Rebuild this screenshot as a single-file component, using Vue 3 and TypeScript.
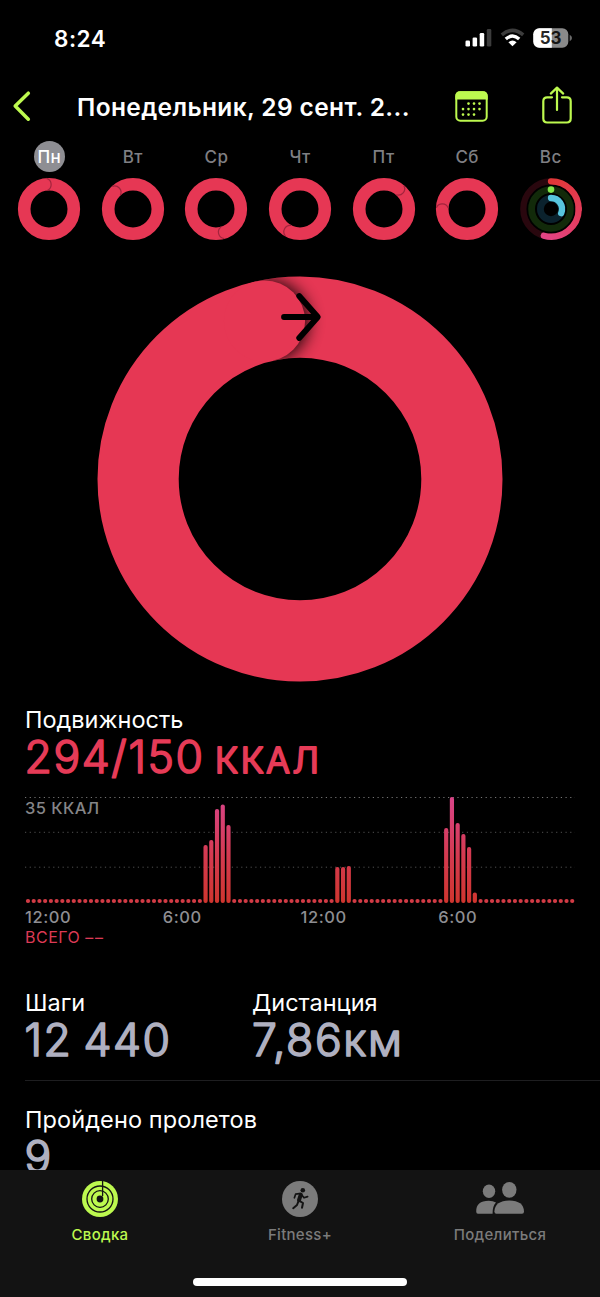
<script setup lang="ts">
interface Day {
  label: string
  angle: number | null
}

// angle: where the head of the closed move ring rests, clockwise from 12 o'clock
const days: Day[] = [
  { label: 'Пн', angle: 3 },
  { label: 'Вт', angle: -35 },
  { label: 'Ср', angle: 172 },
  { label: 'Чт', angle: 216 },
  { label: 'Пт', angle: 48 },
  { label: 'Сб', angle: -80 },
  { label: 'Вс', angle: null },
]

const SLOTS = 96
const SLOT = 550 / SLOTS
const samples: Record<number, number> = {
  31: 58, 32: 63, 33: 94, 34: 98.5, 35: 78,
  54: 36, 55: 36, 56: 37,
  73: 75, 74: 106, 75: 80, 76: 69, 77: 56, 78: 10.5,
}
const bars = Array.from({ length: SLOTS }, (_, i) => {
  const h = samples[i] ?? 4
  return { x: (i + 0.5) * SLOT - 2, y: 109 - h, h }
})

const hours = ['12:00', '6:00', '12:00', '6:00']
const calendarDots = [
  [13.5, 12], [19, 12], [24.5, 12],
  [8, 17.5], [13.5, 17.5], [19, 17.5], [24.5, 17.5],
  [8, 23], [13.5, 23], [19, 23],
]
</script>

<template>
  <div class="screen">
    <header class="status">
      <span class="clock">8:24</span>
      <div class="indicators">
        <svg class="signal" width="27" height="20" viewBox="0 0 27 20">
          <rect x="0.5" y="12.5" width="4.5" height="6" rx="1.3" fill="#fff" />
          <rect x="7.6" y="9.5" width="4.5" height="9" rx="1.3" fill="#fff" />
          <rect x="14.7" y="5" width="4.5" height="13.5" rx="1.3" fill="#fff" />
          <rect x="21.8" y="1" width="4.5" height="17.5" rx="1.3" fill="#3c3c3c" />
        </svg>
        <svg class="wifi" width="25" height="20" viewBox="0 0 25 20">
          <path d="M1.8 6.9Q12.5-2 23.2 6.9" fill="none" stroke="#3c3c3c" stroke-width="3.6" />
          <path d="M5.8 11.1Q12.5 5 19.2 11.1" fill="none" stroke="#fff" stroke-width="3.4" />
          <path d="M8.4 14.2Q12.5 10.8 16.6 14.2L12.5 18.3Z" fill="#fff" />
        </svg>
        <svg class="battery" width="40" height="20" viewBox="0 0 40 20">
          <defs>
            <clipPath id="cell"><rect x="0.3" y="0.3" width="35" height="19.4" rx="6" /></clipPath>
          </defs>
          <g clip-path="url(#cell)">
            <rect width="36" height="20" fill="#8a8a8a" />
            <rect width="18.8" height="20" fill="#fff" />
          </g>
          <path d="M36.7 6.8Q39 8 39 10T36.7 13.2Z" fill="#6a6a6a" />
          <text x="17.6" y="16" text-anchor="middle" class="charge">53</text>
        </svg>
      </div>
    </header>

    <nav class="bar">
      <svg class="back" width="20" height="32" viewBox="0 0 20 32">
        <path d="M17.3 3.2L4.2 16L17.3 29.2" fill="none" stroke="#bdf94f" stroke-width="3.5" stroke-linecap="round" stroke-linejoin="round" />
      </svg>
      <h1 class="title">Понедельник, 29 сент. 2...</h1>
      <svg class="calendar" width="33" height="31" viewBox="0 0 33 31">
        <rect x="1.3" y="1.3" width="30.4" height="28.4" rx="4" fill="none" stroke="#bdf94f" stroke-width="2" />
        <path d="M0.3 8.6V5Q0.3 0.3 5 0.3H28Q32.7 0.3 32.7 5V8.6Z" fill="#bdf94f" />
        <circle v-for="([x, y], i) in calendarDots" :key="i" :cx="x" :cy="y + 0.6" r="1.3" fill="#bdf94f" />
      </svg>
      <svg class="share" width="30" height="38" viewBox="0 0 30 38">
        <g fill="none" stroke="#bdf94f" stroke-width="2.2" stroke-linecap="round" stroke-linejoin="round">
          <path d="M10 11.3H5.2Q1.3 11.3 1.3 15.2V32.6Q1.3 36.5 5.2 36.5H24.8Q28.7 36.5 28.7 32.6V15.2Q28.7 11.3 24.8 11.3H20" />
          <path d="M15 24V2.2M8.8 7.6L15 1.6L21.2 7.6" />
        </g>
      </svg>
    </nav>

    <section class="week">
      <div v-for="(day, i) in days" :key="day.label" class="day">
        <span class="day-label" :class="{ selected: i === 0 }">{{ day.label }}</span>
        <svg width="64" height="64" viewBox="-32 -32 64 64">
          <g v-if="day.angle !== null" fill="none">
            <circle r="24.8" stroke="#e63754" stroke-width="12.6" />
            <g :transform="`rotate(${day.angle})`">
              <path d="M-4 -30.4A6.4 6.4 0 0 1 -2.4 -18.6" stroke="#a3243d" stroke-width="1.2" />
            </g>
          </g>
          <g v-else fill="none" stroke-linecap="round">
            <circle r="27.7" stroke="#29070e" stroke-width="6.3" />
            <circle r="19.4" stroke="#122a0a" stroke-width="6.8" />
            <circle r="10.6" stroke="#0b222d" stroke-width="6.8" />
            <path d="M0 -27.7A27.7 27.7 0 0 1 27.7 0" stroke="url(#moveTop)" stroke-width="6.3" />
            <path d="M27.7 0A27.7 27.7 0 0 1 -7.2 26.7" stroke="url(#moveLow)" stroke-width="6.3" />
            <circle cy="-19.4" r="3.3" fill="#83e64d" />
            <path d="M0 -11A11 11 0 0 1 10.2 4.2" stroke="#57c5de" stroke-width="6.3" />
            <defs>
              <linearGradient id="moveTop" gradientUnits="userSpaceOnUse" x1="0" y1="-28" x2="28" y2="0">
                <stop offset="0" stop-color="#df3737" /><stop offset="1" stop-color="#e33b57" />
              </linearGradient>
              <linearGradient id="moveLow" gradientUnits="userSpaceOnUse" x1="28" y1="0" x2="-7" y2="28">
                <stop offset="0" stop-color="#e33b57" /><stop offset="1" stop-color="#e34486" />
              </linearGradient>
            </defs>
          </g>
        </svg>
      </div>
    </section>

    <section class="hero">
      <svg width="406" height="406" viewBox="-203 -203 406 406">
        <defs>
          <clipPath id="band">
            <path clip-rule="evenodd" d="M0-202.5A202.5 202.5 0 1 1 0 202.5A202.5 202.5 0 1 1 0-202.5ZM0-121.3A121.3 121.3 0 1 0 0 121.3A121.3 121.3 0 1 0 0-121.3Z" />
          </clipPath>
          <clipPath id="ahead"><path d="M-45-203L-26.5-117L60-117V-203Z" /></clipPath>
          <filter id="soft" x="-50%" y="-50%" width="200%" height="200%"><feGaussianBlur stdDeviation="8" /></filter>
        </defs>
        <circle r="161.9" fill="none" stroke="#e63754" stroke-width="81.2" />
        <g clip-path="url(#band)">
          <g clip-path="url(#ahead)">
            <circle cx="-32" cy="-158.2" r="41" fill="#000" opacity=".85" filter="url(#soft)" />
          </g>
          <circle cx="-35.5" cy="-158" r="40.6" fill="#e63754" />
        </g>
        <path d="M-16 -162H17.5M-0.8 -183L17.8 -162L-0.8 -141" fill="none" stroke="#000" stroke-width="5.8" stroke-linecap="round" stroke-linejoin="round" />
      </svg>
    </section>

    <main class="details">
      <h2 class="metric">Подвижность</h2>
      <svg class="figure" width="400" height="50">
        <g class="red">
          <text class="num" x="-0.5" y="42" textLength="178.5">294/150</text>
          <text class="unit" x="190" y="42" textLength="104">ККАЛ</text>
        </g>
      </svg>

      <div class="chart">
        <svg width="550" height="112" viewBox="0 0 550 112">
          <defs>
            <linearGradient id="heat" gradientUnits="userSpaceOnUse" x1="0" y1="3" x2="0" y2="109">
              <stop offset="0" stop-color="#d94488" /><stop offset=".55" stop-color="#d43a50" /><stop offset="1" stop-color="#cf352e" />
            </linearGradient>
          </defs>
          <g stroke-width="1" stroke-dasharray="1.2 3.5">
            <path d="M0 3.5H550" stroke="#757575" />
            <path d="M0 38.3H550M0 73.2H550" stroke="#505050" />
          </g>
          <rect v-for="(bar, i) in bars" :key="i" :x="bar.x" :y="bar.y" width="4.2" :height="bar.h" rx="2" :fill="bar.h === 4 ? '#d23b45' : 'url(#heat)'" />
        </svg>
        <span class="peak">35 ККАЛ</span>
      </div>
      <div class="hours">
        <span v-for="(hour, i) in hours" :key="i">{{ hour }}</span>
      </div>
      <p class="total">ВСЕГО <span class="none">––</span></p>

      <div class="pair">
        <div>
          <h2 class="metric">Шаги</h2>
          <svg class="figure" width="200" height="50">
            <text class="num steps" x="-0.5" y="42" textLength="145.5">12 440</text>
          </svg>
        </div>
        <div>
          <h2 class="metric">Дистанция</h2>
          <svg class="figure" width="200" height="50">
            <text class="num" x="0" y="42" textLength="150">7,86км</text>
          </svg>
        </div>
      </div>

      <div class="flights">
        <h2 class="metric">Пройдено пролетов</h2>
        <svg class="figure" width="200" height="50">
          <text class="num" x="-0.5" y="42">9</text>
        </svg>
      </div>
    </main>

    <footer class="tabs">
      <div class="tab active">
        <svg width="50" height="36" viewBox="-25 -18 50 36">
          <circle r="18" fill="#bdf94f" />
          <g fill="none" stroke="#131313" stroke-width="1.3">
            <circle r="13" />
            <circle r="8.3" />
            <path d="M2.6 -18V-3" />
          </g>
          <circle r="3.4" fill="#131313" />
        </svg>
        <span>Сводка</span>
      </div>
      <div class="tab">
        <svg width="50" height="36" viewBox="-25 -18 50 36">
          <circle r="18" fill="#7b7b7b" />
          <circle cx="2.8" cy="-8.8" r="2.3" fill="#131313" />
          <g fill="none" stroke="#131313" stroke-linecap="round" stroke-linejoin="round">
            <path d="M0.8 -4.4L-1 1.2" stroke-width="4" />
            <path d="M-0.6 -5.4L-4.4 -4.8L-5.6 -1.2M1.4 -4.6L4 -1.2L7.6 -2.4" stroke-width="1.7" />
            <path d="M-0.6 1.8L3 4L2 8.8M-1.6 2.4L-3 6L-6.8 9.2" stroke-width="2" />
          </g>
        </svg>
        <span>Fitness+</span>
      </div>
      <div class="tab">
        <svg width="50" height="36" viewBox="0 0 50 36" fill="#7b7b7b">
          <ellipse cx="14" cy="10.2" rx="6.2" ry="6.8" />
          <path d="M1.2 30.5Q1 20 13.8 19.8Q18 19.8 21 21.4Q17.4 24.8 17.6 32.8H3Q1.2 32.8 1.2 30.5Z" />
          <ellipse cx="34.3" cy="8.8" rx="7.2" ry="7.9" />
          <path d="M19.4 30.5Q20 19.8 34.3 19.6Q48.6 19.8 49 30.5Q49 32.8 47 32.8H21.4Q19.4 32.8 19.4 30.5Z" />
        </svg>
        <span>Поделиться</span>
      </div>
      <i class="home"></i>
    </footer>
  </div>
</template>

<style>
body {
  background: #000;
}
</style>

<style scoped>
.screen {
  box-sizing: border-box;
  width: 600px;
  height: 1297px;
  overflow: hidden;
  display: flex;
  flex-direction: column;
  background: #000;
  color: #fff;
  font-family: Inter, "Noto Sans", sans-serif;
}
svg {
  display: block;
  flex: none;
}
h1,
h2,
p {
  margin: 0;
}
.status {
  height: 76px;
  flex: none;
  display: flex;
  align-items: center;
  justify-content: space-between;
  padding: 0 27px 0 54px;
}
.clock {
  font-size: 22.5px;
  font-weight: 600;
  letter-spacing: 0.5px;
  padding-top: 1px;
}
.indicators {
  display: flex;
  align-items: center;
}
.wifi {
  margin-left: 8px;
}
.battery {
  margin-left: 8px;
}
.charge {
  font-size: 17px;
  font-weight: 700;
  fill: #000;
  fill-opacity: 0.85;
}
.bar {
  height: 60px;
  flex: none;
  display: flex;
  align-items: center;
  padding-left: 11px;
}
.title {
  width: 341px;
  margin-left: 46px;
  padding-top: 1px;
  font-size: 24.5px;
  line-height: 32px;
  font-weight: 600;
  letter-spacing: 0.38px;
  white-space: nowrap;
}
.calendar {
  margin-left: 36.5px;
}
.share {
  margin-left: 54px;
  margin-top: -2px;
}
.week {
  flex: none;
  display: grid;
  grid-template-columns: repeat(7, 1fr);
  width: 585px;
  margin: 5px 7.5px 0;
}
.day {
  display: flex;
  flex-direction: column;
  align-items: center;
}
.day-label {
  width: 31px;
  height: 31px;
  line-height: 32px;
  margin-bottom: 5px;
  border-radius: 50%;
  display: flex;
  justify-content: center;
  font-size: 17px;
  font-weight: 500;
  letter-spacing: 0.4px;
  color: #7f7f83;
}
.day-label.selected {
  background: #8e8e93;
  color: #fff;
}
.hero {
  flex: none;
  display: flex;
  justify-content: center;
  margin-top: 35px;
}
.details {
  flex: none;
  height: 488px;
  overflow: hidden;
  padding-left: 25px;
}
.metric {
  height: 32px;
  line-height: 32px;
  font-size: 23.5px;
  font-weight: 400;
  white-space: nowrap;
}
.details > .metric {
  padding-top: 22px;
}
.figure {
  margin-top: -5px;
  overflow: visible;
}
.num,
.unit {
  fill: #afb0c0;
  stroke: #afb0c0;
  stroke-width: 1.7px;
  stroke-linejoin: round;
  font-size: 44.5px;
  font-weight: 300;
}
.steps {
  word-spacing: -3px;
}
.unit {
  font-size: 35px;
  stroke-width: 2.2px;
}
.red text {
  fill: #e63b57;
  stroke: #e63b57;
}
.chart {
  display: grid;
  margin-top: 13px;
  height: 112px;
}
.chart > * {
  grid-area: 1 / 1;
}
.peak {
  align-self: start;
  margin-top: 4px;
  line-height: 20px;
  font-size: 16.5px;
  font-weight: 500;
  letter-spacing: 0.4px;
  color: #858588;
}
.hours {
  width: 551px;
  display: grid;
  grid-template-columns: repeat(4, 1fr);
  padding-top: 1px;
  line-height: 20px;
  font-size: 16.5px;
  font-weight: 500;
  letter-spacing: 0.6px;
  color: #8e8e92;
}
.total {
  line-height: 20px;
  font-size: 16px;
  letter-spacing: 0.5px;
  color: #dc3a55;
}
.none {
  letter-spacing: 1.6px;
}
.pair {
  display: flex;
  margin-top: 40px;
  height: 93px;
  border-bottom: 1px solid #1e1e20;
}
.pair > div {
  width: 227px;
}
.flights {
  padding-top: 23px;
  letter-spacing: 0.1px;
}
.tabs {
  flex: none;
  height: 127px;
  box-sizing: border-box;
  display: grid;
  grid-template-columns: repeat(3, 200px);
  grid-template-rows: 97px 1fr;
  background: #131313;
}
.tab {
  display: flex;
  flex-direction: column;
  align-items: center;
  padding-top: 11px;
  color: #7b7b7b;
  font-size: 15px;
  font-weight: 500;
  line-height: 20px;
  letter-spacing: 0.3px;
}
.tab span {
  margin-top: 8px;
}
.active {
  color: #bdf94f;
}
.home {
  grid-column: 1 / 4;
  justify-self: center;
  width: 214px;
  height: 8px;
  margin-top: 11px;
  border-radius: 4px;
  background: #fff;
}
</style>
